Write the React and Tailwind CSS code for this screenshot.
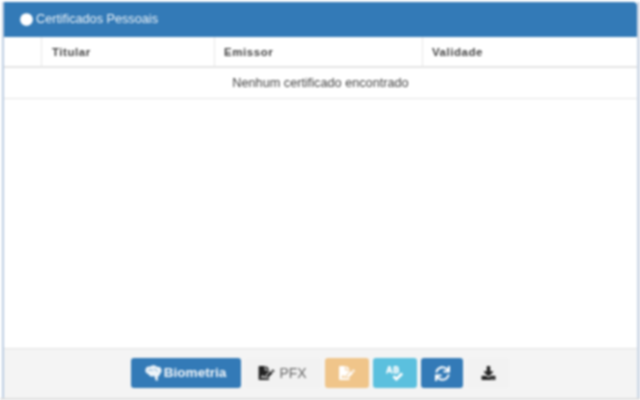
import { FaFileSignature, FaSpellCheck, FaSync, FaDownload, FaCircle } from 'react-icons/fa'

function ToolButton({ className, children }) {
  return (
    <button type="button" className={`flex h-[30px] items-center justify-center rounded-[3px] ${className}`}>
      {children}
    </button>
  )
}

// side view brain, lobes over a short stem
function BrainIcon() {
  return (
    <svg viewBox="0 0 16 15" className="h-[16px] w-[17px]" fill="currentColor">
      <circle cx="4" cy="5" r="3.6" />
      <circle cx="8" cy="3.8" r="3.6" />
      <circle cx="12" cy="5.2" r="3.6" />
      <circle cx="6.5" cy="7.6" r="3.2" />
      <circle cx="11" cy="8" r="3" />
      <path d="M8.5 9h3.2l.6 5.6H10z" />
      <path d="M3 5.4c1.5-1.2 3-1.2 4.4-.3M8.6 3.6c1.2.6 2.2 1.2 3.2 2.6" fill="none" stroke="#337ab7" strokeWidth="0.6" />
    </svg>
  )
}

export default function App() {
  return (
    <div className="flex h-[400px] w-[640px] flex-col overflow-hidden bg-white pt-[2px] font-['Liberation_Sans',Arial,sans-serif] blur-[0.85px]">
      <div className="ml-[2px] flex min-h-0 flex-1 flex-col border-l-2 border-r-[3px] border-l-[#bccde2] border-r-[#d0dae7] bg-white">
        <div className="flex h-[35px] shrink-0 items-center gap-[3px] rounded-tr-[4px] bg-[#337ab7] pl-[16px] text-[12.7px] text-[#eef4f9]">
          <FaCircle className="h-[13px] w-[13px] text-white" />
          <span>Certificados Pessoais</span>
        </div>
        <div className="grid h-[31px] shrink-0 grid-cols-[38px_173px_208px_1fr] border-b-2 border-[#e4e4e4] text-[11.5px] font-bold tracking-[0.55px] text-[#444]">
          <div className="border-r border-[#e8e8e8]" />
          <div className="flex items-center border-r border-[#e8e8e8] pl-[10px] pt-[2px]">Titular</div>
          <div className="flex items-center border-r border-[#e8e8e8] pl-[9px] pt-[2px]">Emissor</div>
          <div className="flex items-center pl-[9px] pt-[2px]">Validade</div>
        </div>
        <div className="flex h-[31px] shrink-0 items-center justify-center border-b border-[#e4e4e4] pt-[1px] text-[12.7px] text-[#444]">
          Nenhum certificado encontrado
        </div>
        <div className="flex-1" />
        <div className="flex h-[50px] shrink-0 items-start justify-center gap-[4px] border-t border-[#e2e2e2] bg-[#f4f4f4] pr-[2px] pt-[9px]">
          <ToolButton className="w-[110px] gap-[2px] bg-[#337ab7] text-[13.6px] font-bold text-[#eef4f9]">
            <BrainIcon />
            Biometria
          </ToolButton>
          <ToolButton className="w-[76px] gap-[4px] bg-[#f2f2f2] text-[14px] text-[#666]">
            <FaFileSignature className="h-[14px] w-[17px] text-[#222]" />
            PFX
          </ToolButton>
          <ToolButton className="w-[44px] bg-[#f0c58a] text-white">
            <FaFileSignature className="h-[14px] w-[18px]" />
          </ToolButton>
          <ToolButton className="w-[44px] bg-[#5bc0de] text-white">
            <FaSpellCheck className="h-[15px] w-[17px]" />
          </ToolButton>
          <ToolButton className="w-[42px] bg-[#337ab7] pl-[2px] text-white">
            <FaSync className="h-[15px] w-[15px]" />
          </ToolButton>
          <ToolButton className="w-[42px] bg-[#f2f2f2] pl-[2px] text-[#222]">
            <FaDownload className="h-[14px] w-[15px]" />
          </ToolButton>
        </div>
      </div>
      <div className="h-[2px] shrink-0 bg-[#dedede]" />
    </div>
  )
}
